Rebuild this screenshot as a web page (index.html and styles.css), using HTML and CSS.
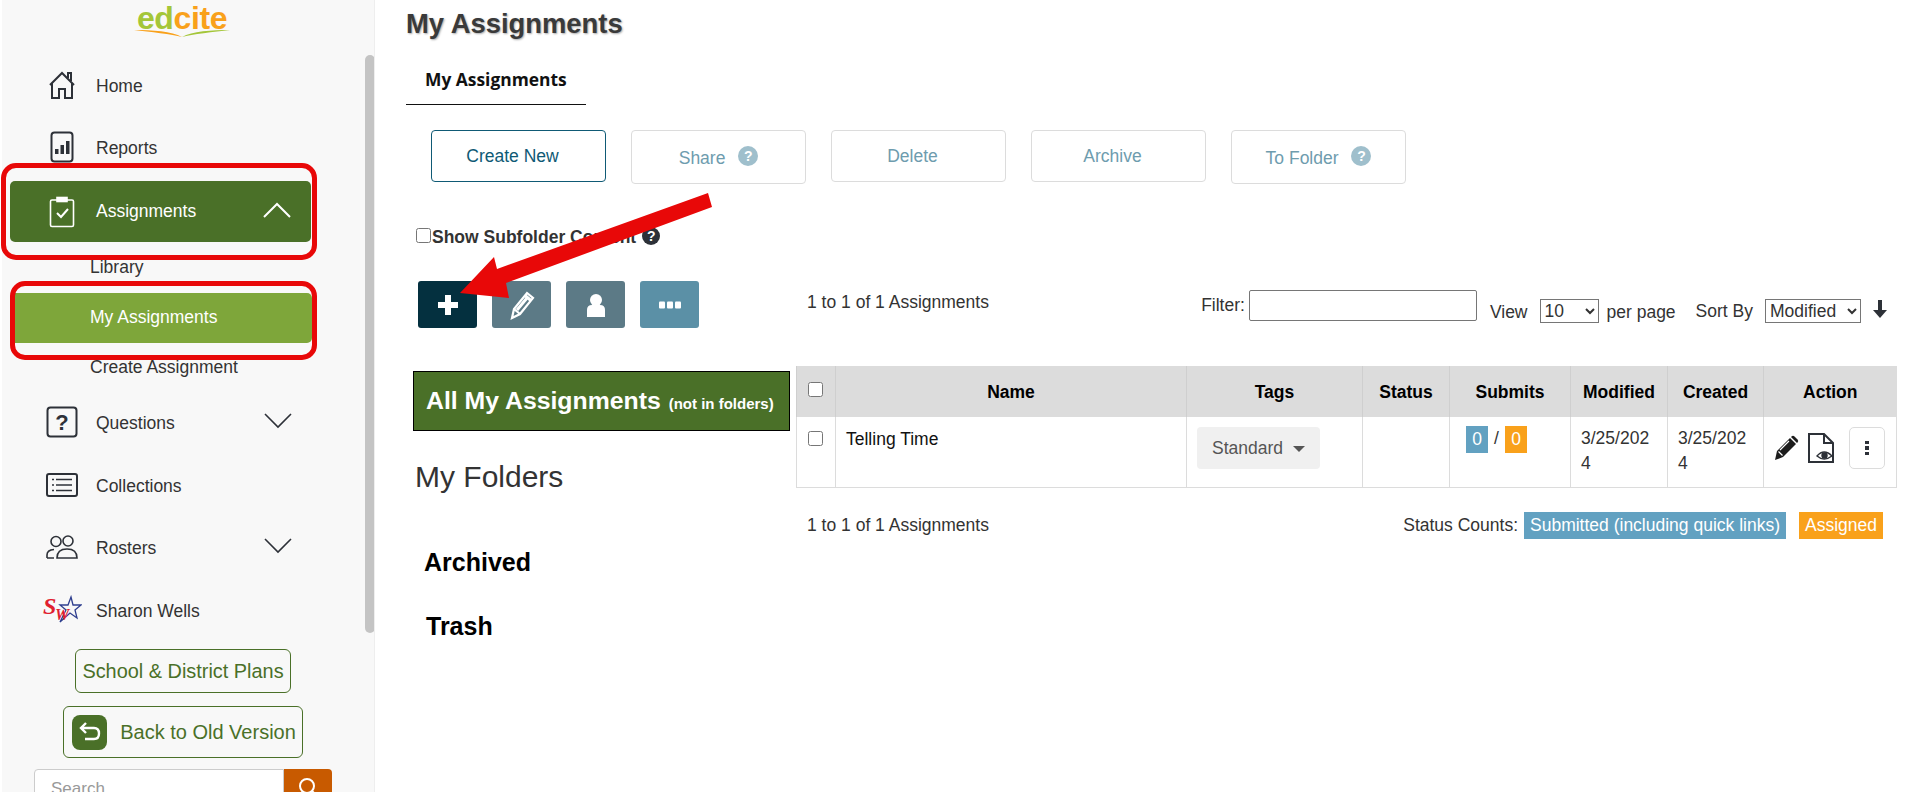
FILE: index.html
```html
<!DOCTYPE html>
<html lang="en">
<head>
  <meta charset="UTF-8">
  <title>My Assignments</title>
  <link rel="stylesheet" href="styles.css">
</head>
<body>
  <aside class="sidebar">
    <div class="logo">
      <div class="logo-text"><span class="logo-ed">ed</span><span class="logo-cite">cite</span></div>
      <svg class="logo-book" width="96" height="9" viewBox="0 0 96 9">
        <path d="M0 1 C18 1 38 2 48 8 C38 5 16 3 0 1Z" fill="#f9a11b"/>
        <path d="M96 1 C78 1 58 2 48 8 C58 5 80 3 96 1Z" fill="#a4c639"/>
      </svg>
    </div>

    <a class="nav-item">
      <span class="nav-icon">
        <svg width="28" height="30" viewBox="0 0 28 30" fill="none" stroke="#2d3138" stroke-width="2">
          <path d="M2 15 L14 3 L26 15 M4 13 V28 H11 V19 H17 V28 H24 V13 M20 8 V3 H23 V11"/>
        </svg>
      </span>
      <span class="nav-label">Home</span>
    </a>
    <a class="nav-item">
      <span class="nav-icon">
        <svg width="24" height="32" viewBox="0 0 24 32">
          <rect x="1.5" y="1.5" width="21" height="29" rx="3" fill="none" stroke="#2d3138" stroke-width="2"/>
          <rect x="5" y="18" width="3.5" height="5" fill="#2d3138"/>
          <rect x="10.5" y="14" width="3.5" height="9" fill="#2d3138"/>
          <rect x="16" y="10" width="3.5" height="13" fill="#2d3138"/>
        </svg>
      </span>
      <span class="nav-label">Reports</span>
    </a>

    <a class="nav-item nav-open">
      <span class="nav-icon">
        <svg width="26" height="32" viewBox="0 0 26 32" fill="none" stroke="#fff" stroke-width="1.6">
          <path d="M8 4 H3 Q1.5 4 1.5 5.5 V29 Q1.5 30.5 3 30.5 H23 Q24.5 30.5 24.5 29 V5.5 Q24.5 4 23 4 H18"/>
          <rect x="8" y="1.5" width="10" height="4" fill="#fff"/>
          <path d="M8 17 L12 21 L19 13" stroke-width="2"/>
        </svg>
      </span>
      <span>Assignments</span>
      <svg class="chevron" width="28" height="16" viewBox="0 0 28 16" fill="none" stroke="#fff" stroke-width="2">
        <path d="M1 15 L14 2 L27 15"/>
      </svg>
    </a>
    <a class="sub-item sub-first">Library</a>
    <a class="sub-item sub-active">My Assignments</a>
    <a class="sub-item">Create Assignment</a>

    <a class="nav-item">
      <span class="nav-icon">
        <svg width="32" height="32" viewBox="0 0 32 32">
          <rect x="1.5" y="1.5" width="29" height="29" rx="3" fill="none" stroke="#2d3138" stroke-width="2"/>
          <text class="icon-q" x="16" y="24" text-anchor="middle">?</text>
        </svg>
      </span>
      <span class="nav-label">Questions</span>
      <svg class="chevron" width="28" height="16" viewBox="0 0 28 16" fill="none" stroke="#2d3138" stroke-width="1.6">
        <path d="M1 1 L14 14 L27 1"/>
      </svg>
    </a>
    <a class="nav-item nav-collections">
      <span class="nav-icon">
        <svg width="32" height="24" viewBox="0 0 32 24" fill="none" stroke="#2d3138" stroke-width="1.6">
          <rect x="1" y="1" width="30" height="22" rx="2" stroke-width="2"/>
          <path d="M10 6.5 H26 M10 12 H26 M10 17.5 H26 M6 6.5 H8 M6 12 H8 M6 17.5 H8"/>
        </svg>
      </span>
      <span class="nav-label">Collections</span>
    </a>
    <a class="nav-item">
      <span class="nav-icon">
        <svg width="32" height="24" viewBox="0 0 32 24" fill="none" stroke="#2d3138" stroke-width="1.6">
          <circle cx="10" cy="6.5" r="5"/>
          <circle cx="22" cy="6" r="5"/>
          <path d="M1 23 V20 Q1 15 8 14.5 M8 23 H1 M11 23 Q11 14 21 14 Q31 14 31 23 Z"/>
        </svg>
      </span>
      <span class="nav-label">Rosters</span>
      <svg class="chevron" width="28" height="16" viewBox="0 0 28 16" fill="none" stroke="#2d3138" stroke-width="1.6">
        <path d="M1 1 L14 14 L27 1"/>
      </svg>
    </a>
    <a class="nav-item nav-sharon">
      <span class="sw-logo">
        <svg class="sw-star" width="24" height="28" viewBox="0 0 24 28" fill="none" stroke="#2f3f8f" stroke-width="1.3">
          <path d="M13 2 L15 10 L23 10 L17 15 L19 23 L12 18 L2 27 L8 15 L2 10 L10 10 Z"/>
        </svg>
        <span class="sw-s">S</span><span class="sw-w">W</span>
      </span>
      <span class="nav-label">Sharon Wells</span>
    </a>

    <div class="side-buttons">
      <a class="plan-btn">School &amp; District Plans</a>
      <a class="old-btn">
        <span class="old-icon">
          <svg width="24" height="22" viewBox="0 0 24 22" fill="none" stroke="#fff" stroke-width="2.4">
            <path d="M8 2 L3 7 L8 12 M3 7 H16 Q21 7 21 12.5 Q21 18 16 18 H7"/>
          </svg>
        </span>
        <span>Back to Old Version</span>
      </a>
    </div>

    <div class="side-search">
      <input class="side-input" type="text" placeholder="Search">
      <button class="side-go">
        <svg width="24" height="24" viewBox="0 0 24 24" fill="none" stroke="#fff" stroke-width="2">
          <circle cx="11" cy="10" r="7"/>
          <path d="M16 15 L21 20"/>
        </svg>
      </button>
    </div>

    <div class="side-scroll"></div>
  </aside>

  <main class="main">
    <h1 class="title">My Assignments</h1>
    <div class="tabs"><span class="tab">My Assignments</span></div>

    <div class="actions">
      <button class="act act-on">Create New</button>
      <button class="act act-tall">Share <span class="hint">?</span></button>
      <button class="act">Delete</button>
      <button class="act">Archive</button>
      <button class="act act-tall">To Folder <span class="hint">?</span></button>
    </div>

    <label class="subfolder">
      <input class="sub-check" type="checkbox">
      <b>Show Subfolder Content</b>
      <span class="dark-hint">?</span>
    </label>

    <div class="content">
      <section class="left">
        <div class="tools">
          <button class="tool tool-dark">
            <svg width="22" height="22" viewBox="0 0 22 22"><path d="M8 1 H14 V8 H21 V14 H14 V21 H8 V14 H1 V8 H8 Z" fill="#fff"/></svg>
          </button>
          <button class="tool">
            <svg width="26" height="30" viewBox="0 0 26 30" fill="none" stroke="#fff" stroke-width="2.2">
              <path d="M3 28 L5 19 L18 3 L24 8 L11 24 Z M5 19 L11 24"/>
              <path d="M16 5.5 L22 10.5" stroke-width="3"/>
              <path d="M8 20 L18 8" stroke-width="3"/>
            </svg>
          </button>
          <button class="tool">
            <svg width="20" height="24" viewBox="0 0 20 24" fill="#fff">
              <circle cx="10" cy="7" r="6"/>
              <path d="M1 24 V17 Q1 12 6 12 H14 Q19 12 19 17 V24 Z"/>
            </svg>
          </button>
          <button class="tool tool-light">
            <svg width="22" height="8" viewBox="0 0 22 8" fill="#fff">
              <rect width="6" height="7" y="0.5" rx="1"/>
              <rect x="8" width="6" height="7" y="0.5" rx="1"/>
              <rect x="16" width="6" height="7" y="0.5" rx="1"/>
            </svg>
          </button>
        </div>
        <div class="all-folder"><b class="all-big">All My Assignments</b> <b class="all-small">(not in folders)</b></div>
        <h2 class="folders-head">My Folders</h2>
        <div class="folder folder-archived">Archived</div>
        <div class="folder folder-trash">Trash</div>
      </section>

      <section class="right">
        <div class="list-top">
          <span class="count">1 to 1 of 1 Assignments</span>
          <div class="list-controls">
            <label class="filter">Filter: <input class="filter-input" type="text"></label>
            <span class="view-label">View</span>
            <select class="pick pick-view"><option>10</option></select>
            <span class="per-label">per page</span>
            <span class="sort-label">Sort By</span>
            <select class="pick pick-sort"><option>Modified</option></select>
            <svg class="sort-arrow" width="14" height="18" viewBox="0 0 14 18"><path d="M5 0 H9 V10 H14 L7 18 L0 10 H5 Z" fill="#2d3138"/></svg>
          </div>
        </div>

        <table class="grid">
          <colgroup>
            <col class="c-check"><col class="c-name"><col class="c-tags"><col class="c-status">
            <col class="c-submits"><col class="c-modified"><col class="c-created"><col class="c-action">
          </colgroup>
          <thead>
            <tr>
              <th class="cell-check"><input class="row-check" type="checkbox"></th>
              <th>Name</th>
              <th>Tags</th>
              <th>Status</th>
              <th>Submits</th>
              <th>Modified</th>
              <th>Created</th>
              <th>Action</th>
            </tr>
          </thead>
          <tbody>
            <tr>
              <td class="cell-check"><input class="row-check" type="checkbox"></td>
              <td class="cell-name">Telling Time</td>
              <td class="cell-tags"><button class="tag-btn">Standard <span class="caret"></span></button></td>
              <td></td>
              <td class="cell-submits"><span class="num num-blue">0</span><span class="slash">/</span><span class="num num-orange">0</span></td>
              <td class="cell-date">3/25/2024</td>
              <td class="cell-date">3/25/2024</td>
              <td class="cell-action">
                <div class="action-row">
                  <svg width="25" height="26" viewBox="0 0 25 26">
                    <path d="M1 25 L3 16 L16 3 L22 9 L9 22 Z" fill="#1c1c1c"/>
                    <path d="M17.5 1.5 Q19 0 20.5 1.5 L23.5 4.5 Q25 6 23.5 7.5 L23 8 L17 2 Z" fill="#1c1c1c"/>
                    <path d="M4.5 16.5 L8.5 20.5 M6 15 L15 6" stroke="#fff" stroke-width="1.2"/>
                  </svg>
                  <svg width="26" height="30" viewBox="0 0 26 30" fill="none" stroke="#2d3138" stroke-width="2">
                    <path d="M1 1 H16 L25 10 V29 H1 Z M16 1 V10 H25"/>
                    <path d="M9 23 Q16 15 24 23 Q16 29 9 23 Z" fill="#fff" stroke-width="1.4"/>
                    <circle cx="16.5" cy="22.5" r="3.2" fill="#2d3138" stroke="none"/>
                  </svg>
                  <button class="more-btn"><span class="dot"></span><span class="dot"></span><span class="dot"></span></button>
                </div>
              </td>
            </tr>
          </tbody>
        </table>

        <div class="list-bottom">
          <span class="count">1 to 1 of 1 Assignments</span>
          <div class="legend">
            <span class="legend-label">Status Counts:</span>
            <span class="legend-tag num-blue">Submitted (including quick links)</span>
            <span class="legend-tag num-orange">Assigned</span>
          </div>
        </div>
      </section>
    </div>
  </main>

  <!-- annotations drawn on top of the screenshot -->
  <div class="mark mark-one"></div>
  <div class="mark mark-two"></div>
  <svg class="arrow" width="1910" height="792" viewBox="0 0 1910 792">
    <path d="M708 193 L712 207 L506 283 L509 298 L460 293 L494 257 L497 269 Z" fill="#e80808"/>
  </svg>
</body>
</html>
```

FILE: styles.css
```css
* {
  box-sizing: border-box;
}

html, body {
  height: 792px;
  overflow: hidden;
}

body {
  margin: 0;
  display: flex;
  background: #fff;
  color: #333;
  font-family: "Liberation Sans", Arial, sans-serif;
  font-size: 17.5px;
}

button, input, select {
  font-family: inherit;
}

/* sidebar */
.sidebar {
  position: relative;
  flex: 0 0 373px;
  margin-left: 2px;
  height: 792px;
  overflow: hidden;
  background: #f8f8f8;
  border-right: 1px solid #eee;
}

.logo {
  height: 54px;
  display: flex;
  flex-direction: column;
  align-items: center;
  padding-right: 12px;
}

.logo-text {
  font-weight: 700;
  font-size: 32px;
  line-height: 37px;
  letter-spacing: -0.4px;
}

.logo-ed {
  color: #a4c639;
}

.logo-cite {
  color: #f9a11b;
}

.logo-book {
  display: block;
  margin-top: -8px;
}

.nav-item {
  position: relative;
  display: flex;
  align-items: center;
  height: 62px;
  padding-left: 26px;
  color: #333;
}

.nav-icon {
  width: 68px;
  display: flex;
  justify-content: center;
}

.nav-label {
  padding-top: 2px;
}

.nav-open {
  height: 61px;
  width: 301px;
  margin: 3px 0 0 8px;
  padding-left: 18px;
  background: #4a7028;
  border-radius: 5px;
  color: #fff;
}

.chevron {
  position: absolute;
  left: 262px;
  top: 22px;
}

.nav-open .chevron {
  left: 253px;
  top: 21px;
}

.sub-item {
  display: flex;
  align-items: center;
  height: 32px;
  padding: 2px 0 0 88px;
  color: #333;
}

.sub-first {
  margin-top: 8px;
}

.sub-active {
  width: 298px;
  height: 50px;
  margin: 11px 0 7px 12px;
  padding: 0 0 2px 76px;
  background: #7ea63a;
  border-radius: 0 5px 5px 0;
  color: #fff;
}

.sub-active + .sub-item {
  margin-bottom: 9px;
}

.nav-collections {
  margin-top: 1px;
}

.nav-sharon {
  margin-top: 1px;
}

.sw-logo {
  position: relative;
  display: block;
  width: 68px;
  height: 30px;
  font-family: "Liberation Serif", serif;
  font-style: italic;
  font-weight: 700;
  color: #e0202f;
}

.sw-star {
  position: absolute;
  left: 30px;
  top: 0;
}

.sw-s {
  position: absolute;
  left: 15px;
  top: -2px;
  font-size: 24px;
  line-height: 26px;
}

.sw-w {
  position: absolute;
  left: 27px;
  top: 11px;
  font-size: 16px;
  line-height: 18px;
}

.side-buttons {
  display: flex;
  flex-direction: column;
  align-items: center;
  margin-top: 8px;
  padding-right: 10px;
}

.plan-btn {
  height: 44px;
  padding: 0 6px;
  display: flex;
  align-items: center;
  border: 1px solid #4a7028;
  border-radius: 6px;
  color: #4a7028;
  font-size: 19.9px;
}

.old-btn {
  height: 52px;
  margin-top: 13px;
  padding: 0 6px 0 8px;
  display: flex;
  align-items: center;
  gap: 13px;
  border: 1px solid #4a7028;
  border-radius: 6px;
  color: #4a7028;
  font-size: 20px;
}

.old-icon {
  width: 35px;
  height: 35px;
  display: flex;
  align-items: center;
  justify-content: center;
  background: #4a7028;
  border-radius: 8px;
}

.side-search {
  display: flex;
  margin: 11px 0 0 32px;
}

.side-input {
  width: 250px;
  height: 40px;
  padding: 0 16px;
  border: 1px solid #ccc;
  border-radius: 4px 0 0 4px;
  font-size: 17px;
}

.side-input::placeholder {
  color: #999;
}

.side-go {
  width: 48px;
  height: 40px;
  padding: 0;
  border: 0;
  background: #c85a00;
  border-radius: 0 4px 4px 0;
}

.side-scroll {
  position: absolute;
  left: 363px;
  top: 55px;
  width: 10px;
  height: 578px;
  background: #c4c4c4;
  border-radius: 5px;
}

/* main column */
.main {
  flex: 1;
  padding: 0 14px 0 31px;
  min-width: 0;
}

.title {
  margin: 0;
  height: 48px;
  line-height: 48px;
  font-size: 27.4px;
  color: #3a3a3a;
  text-shadow: 1px 1px 2px #aaa;
}

.tabs {
  height: 57px;
  padding-top: 19px;
}

.tab {
  display: block;
  width: 180px;
  height: 38px;
  padding-left: 19px;
  font-family: "Open Sans", sans-serif;
  font-weight: 700;
  font-size: 17.4px;
  line-height: 24px;
  color: #111;
  border-bottom: 1px solid #111;
}

.actions {
  display: flex;
  align-items: flex-start;
  gap: 25px;
  margin: 25px 0 0 25px;
}

.act {
  width: 175px;
  height: 52px;
  padding: 0 12px 0 0;
  background: #fff;
  border: 1px solid #dcdcdc;
  border-radius: 4px;
  color: #6e9cae;
  font-size: 17.5px;
}

.act-on {
  border-color: #0f5a75;
  color: #0f5a75;
}

.act-tall {
  height: 54px;
  padding: 0;
}

.hint {
  display: inline-block;
  width: 20px;
  height: 20px;
  margin-left: 8px;
  border-radius: 50%;
  background: #9fbfcc;
  color: #fff;
  font-weight: 700;
  font-size: 14px;
  line-height: 20px;
  vertical-align: 3px;
}

.subfolder {
  display: flex;
  align-items: center;
  height: 18px;
  margin: 44px 0 0 10px;
  color: #333;
}

.sub-check {
  width: 15px;
  height: 15px;
  margin: 0 1px 4px 0;
}

.dark-hint {
  width: 18px;
  height: 18px;
  margin: 0 0 2px 6px;
  border-radius: 50%;
  background: #2d3138;
  color: #fff;
  font-weight: 700;
  font-size: 14px;
  line-height: 18px;
  text-align: center;
}

.content {
  display: grid;
  grid-template-columns: 390px 1100px;
  margin-top: 17px;
}

.tools {
  display: flex;
  gap: 15px;
  margin: 18px 0 0 12px;
}

.tool {
  width: 59px;
  height: 47px;
  padding: 0;
  display: flex;
  align-items: center;
  justify-content: center;
  border: 0;
  border-radius: 3px;
  background: #5c7a86;
}

.tool-dark {
  background: #04303f;
}

.tool-light {
  background: #5b90a6;
}

.all-folder {
  width: 377px;
  height: 60px;
  margin: 43px 0 0 7px;
  padding-left: 12px;
  display: flex;
  align-items: center;
  gap: 8px;
  background: #4a7028;
  border: 1px solid #000;
  color: #fff;
  white-space: nowrap;
}

.all-big {
  font-size: 24.8px;
}

.all-small {
  font-size: 15px;
  padding-top: 5px;
}

.folders-head {
  margin: 28px 0 0 9px;
  font-weight: 400;
  font-size: 30px;
  line-height: 36px;
  color: #333;
}

.folder {
  font-weight: 700;
  font-size: 25px;
  line-height: 30px;
  color: #000;
}

.folder-archived {
  margin: 52px 0 0 18px;
}

.folder-trash {
  margin: 34px 0 0 20px;
}

.list-top {
  display: flex;
  justify-content: space-between;
  height: 103px;
}

.count {
  margin-left: 11px;
  padding-top: 29px;
  line-height: 20px;
}

.list-controls {
  display: flex;
  align-items: flex-start;
  padding: 27px 9px 0 0;
}

.filter {
  display: flex;
  align-items: center;
  gap: 4px;
  margin-right: 13px;
}

.filter-input {
  width: 228px;
  height: 31px;
  border: 1px solid #767676;
  border-radius: 2px;
}

.view-label, .per-label, .sort-label {
  padding-top: 12px;
  line-height: 20px;
}

.pick {
  margin-top: 9px;
  height: 24px;
  border: 1px solid #767676;
  background: #fff;
  color: #333;
  font-size: 17.5px;
}

.pick-view {
  width: 59px;
  margin-left: 12px;
}

.per-label {
  margin-left: 8px;
}

.sort-label {
  margin-left: 20px;
  padding-top: 11px;
}

.pick-sort {
  width: 96px;
  margin-left: 12px;
}

.sort-arrow {
  margin: 10px 0 0 12px;
}

.grid {
  width: 1100px;
  table-layout: fixed;
  border-collapse: collapse;
}

.c-check { width: 39px; }
.c-name { width: 351px; }
.c-tags { width: 176px; }
.c-status { width: 87px; }
.c-submits { width: 121px; }
.c-modified { width: 97px; }
.c-created { width: 96px; }
.c-action { width: 133px; }

.grid th {
  height: 51px;
  background: #dcdcdc;
  border-left: 1px solid #cfcfcf;
  color: #000;
  font-size: 17.5px;
  padding: 2px 0 0;
}

.grid td {
  height: 70px;
  padding: 9px 10px 0;
  vertical-align: top;
  border: 1px solid #dcdcdc;
  border-top: 0;
  line-height: 25px;
}

.grid .cell-check {
  padding: 0 1px 0 0;
  text-align: center;
}

.row-check {
  width: 15px;
  height: 15px;
  margin: 0;
}

thead .row-check {
  margin-bottom: 6px;
}

tbody .row-check {
  margin-top: 14px;
}

.grid .cell-name {
  padding: 10px 0 0 10px;
  color: #111;
}

.grid .cell-tags {
  padding-top: 10px;
}

.tag-btn {
  width: 123px;
  height: 42px;
  margin-left: 0;
  background: #f0f0f0;
  border: 0;
  border-radius: 4px;
  color: #555;
  font-size: 17.5px;
}

.caret {
  display: inline-block;
  margin-left: 5px;
  vertical-align: 2px;
  border-top: 6px solid #555;
  border-left: 6px solid transparent;
  border-right: 6px solid transparent;
}

.grid .cell-submits {
  padding: 9px 0 0 16px;
}

.num {
  display: inline-block;
  width: 22px;
  height: 27px;
  line-height: 27px;
  text-align: center;
  color: #fff;
}

.num-blue {
  background: #62a1c1;
}

.num-orange {
  background: #f9a11b;
}

.slash {
  display: inline-block;
  width: 17px;
  text-align: center;
  vertical-align: top;
}

.grid .cell-date {
  padding-right: 12px;
  word-break: break-all;
}

.grid .cell-action {
  padding: 10px 0 0 10px;
}

.action-row {
  display: flex;
  align-items: center;
  gap: 9px;
}

.more-btn {
  width: 36px;
  height: 42px;
  margin-left: 6px;
  padding: 0;
  display: flex;
  flex-direction: column;
  align-items: center;
  justify-content: center;
  gap: 2px;
  background: #fff;
  border: 1px solid #dcdcdc;
  border-radius: 5px;
}

.dot {
  width: 4px;
  height: 3.5px;
  background: #2d3138;
}

.list-bottom {
  display: flex;
  justify-content: space-between;
  margin-top: 24px;
}

.list-bottom .count {
  padding-top: 3px;
}

.legend {
  display: flex;
  align-items: center;
  padding-right: 13px;
}

.legend-label {
  margin-right: 6px;
}

.legend-tag {
  height: 27px;
  padding: 0 6px;
  line-height: 27px;
  color: #fff;
}

.legend-tag + .legend-tag {
  margin-left: 13px;
}

/* red annotations */
.mark {
  position: absolute;
  border: 5px solid #e80808;
  border-radius: 15px;
}

.mark-one {
  left: 1px;
  top: 163px;
  width: 316px;
  height: 97px;
}

.mark-two {
  left: 10px;
  top: 281px;
  width: 307px;
  height: 79px;
}

.arrow {
  position: absolute;
  left: 0;
  top: 0;
  pointer-events: none;
}

.icon-q {
  font-family: "Liberation Sans", sans-serif;
  font-weight: 700;
  font-size: 22px;
  fill: #2d3138;
}
```
